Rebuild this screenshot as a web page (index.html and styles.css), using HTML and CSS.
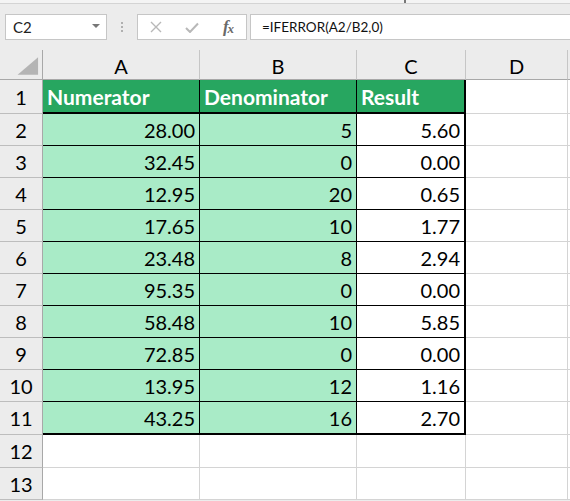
FILE: index.html
```html
<!DOCTYPE html>
<html>
<head>
<meta charset="utf-8">
<link rel="stylesheet" href="styles.css">
</head>
<body>
<div class="top"><span class="handle"></span></div>
<div class="toolbar">
  <div class="namebox"><span class="nb-text">C2</span><span class="arrow"></span></div>
  <div class="sep"><i></i><i></i><i></i></div>
  <div class="btns">
    <span class="btn"><svg width="12" height="12" viewBox="0 0 12 12"><path d="M1 1L11 11M11 1L1 11" stroke="#b8b8b8" stroke-width="1.4" fill="none"/></svg></span>
    <span class="btn"><svg width="14" height="11" viewBox="0 0 14 11"><path d="M1 6L5 10L13 1.5" stroke="#b8b8b8" stroke-width="2" fill="none"/></svg></span>
    <span class="btn"><span class="fx">f<span class="fxx">x</span></span></span>
  </div>
  <div class="formula">=IFERROR(A2/B2,0)</div>
</div>
<div class="grid">
  <div class="cell corner"><svg width="43" height="29" viewBox="0 0 43 29"><polygon points="18,25 39,25 39,7" fill="#b4b4b4"/></svg></div>
  <div class="cell ch">A</div><div class="cell ch">B</div><div class="cell ch">C</div><div class="cell ch">D</div><div class="cell ch edge"></div>

  <div class="cell rh">1</div><div class="cell hd">Numerator</div><div class="cell hd">Denominator</div><div class="cell hd c">Result</div><div class="cell"></div><div class="cell edge"></div>

  <div class="cell rh">2</div><div class="cell dt">28.00</div><div class="cell dt">5</div><div class="cell res">5.60</div><div class="cell"></div><div class="cell edge"></div>
  <div class="cell rh">3</div><div class="cell dt">32.45</div><div class="cell dt">0</div><div class="cell res">0.00</div><div class="cell"></div><div class="cell edge"></div>
  <div class="cell rh">4</div><div class="cell dt">12.95</div><div class="cell dt">20</div><div class="cell res">0.65</div><div class="cell"></div><div class="cell edge"></div>
  <div class="cell rh">5</div><div class="cell dt">17.65</div><div class="cell dt">10</div><div class="cell res">1.77</div><div class="cell"></div><div class="cell edge"></div>
  <div class="cell rh">6</div><div class="cell dt">23.48</div><div class="cell dt">8</div><div class="cell res">2.94</div><div class="cell"></div><div class="cell edge"></div>
  <div class="cell rh">7</div><div class="cell dt">95.35</div><div class="cell dt">0</div><div class="cell res">0.00</div><div class="cell"></div><div class="cell edge"></div>
  <div class="cell rh">8</div><div class="cell dt">58.48</div><div class="cell dt">10</div><div class="cell res">5.85</div><div class="cell"></div><div class="cell edge"></div>
  <div class="cell rh">9</div><div class="cell dt">72.85</div><div class="cell dt">0</div><div class="cell res">0.00</div><div class="cell"></div><div class="cell edge"></div>
  <div class="cell rh">10</div><div class="cell dt">13.95</div><div class="cell dt">12</div><div class="cell res">1.16</div><div class="cell"></div><div class="cell edge"></div>
  <div class="cell rh">11</div><div class="cell dt last">43.25</div><div class="cell dt last">16</div><div class="cell res last">2.70</div><div class="cell"></div><div class="cell edge"></div>

  <div class="cell rh">12</div><div class="cell"></div><div class="cell"></div><div class="cell"></div><div class="cell"></div><div class="cell edge"></div>
  <div class="cell rh">13</div><div class="cell"></div><div class="cell"></div><div class="cell"></div><div class="cell"></div><div class="cell edge"></div>
</div>
</body>
</html>
```
FILE: styles.css
```css
html, body {
  margin: 0;
  padding: 0;
  background: #ececec;
  width: 570px;
  height: 501px;
  overflow: hidden;
}
body {
  font-family: Lato, "Open Sans", sans-serif;
  color: #000;
}
.top {
  height: 3px;
  background: #f4f4f4;
  border-bottom: 1px solid #d4d4d4;
  display: flex;
}
.handle {
  width: 2px;
  height: 3px;
  background: #777;
  margin-left: 404px;
}
.toolbar {
  height: 46px;
  box-sizing: border-box;
  padding: 10px 0 0 5px;
  display: flex;
  align-items: flex-start;
}
.namebox, .btns, .formula {
  height: 26px;
  box-sizing: border-box;
  background: #fff;
  border: 1px solid #c6c6c6;
  display: flex;
  align-items: center;
}
.namebox {
  width: 102px;
  padding-left: 7px;
  justify-content: space-between;
  padding-right: 6px;
}
.nb-text {
  font-size: 15px;
  color: #222;
}
.arrow {
  width: 0;
  height: 0;
  border-left: 4px solid transparent;
  border-right: 4px solid transparent;
  border-top: 4px solid #777;
  margin-top: -3px;
}
.sep {
  width: 30px;
  height: 26px;
  display: flex;
  flex-direction: column;
  align-items: center;
  justify-content: center;
  gap: 2px;
}
.sep i {
  width: 2px;
  height: 2px;
  background: #b0b0b0;
}
.btns {
  width: 110px;
}
.btn {
  width: 36px;
  display: flex;
  justify-content: center;
  align-items: center;
  height: 24px;
}
.fx {
  font-family: "Liberation Serif", serif;
  font-style: italic;
  font-weight: bold;
  font-size: 17px;
  color: #6a6a6a;
  letter-spacing: -1px;
}
.fxx {
  font-size: 13px;
  position: relative;
  top: 1px;
}
.formula {
  margin-left: 3px;
  flex: 1;
  border-right: none;
  padding-left: 11px;
  font-size: 13.5px;
  color: #111;
}
.grid {
  display: grid;
  grid-template-columns: 43px 157px 157px 109px 102px 2px;
  grid-template-rows: 30px 34px repeat(9, 32px) 33px 33px 32px;
}
.cell {
  box-sizing: border-box;
  background: #fff;
  border-right: 1px solid #d4d4d4;
  border-bottom: 1px solid #d4d4d4;
  display: flex;
  align-items: center;
  font-size: 20px;
  overflow: hidden;
  white-space: nowrap;
}
.edge {
  border-right: none;
}
.corner {
  background: #ececec;
  border-right: 1px solid #a8a8a8;
  border-bottom: 1px solid #a8a8a8;
}
.ch {
  background: #ececec;
  justify-content: center;
  border-right-color: #c6c6c6;
  border-bottom-color: #a8a8a8;
  padding-top: 3px;
  font-size: 20px;
}
.ch.edge {
  border-right: none;
}
.rh {
  background: #ececec;
  justify-content: center;
  border-right-color: #a8a8a8;
  border-bottom-color: #bdbdbd;
  font-size: 20px;
}
.hd {
  background: #27a660;
  color: #fff;
  font-weight: bold;
  font-size: 21px;
  padding-left: 4px;
  border-right-color: #000;
  border-bottom: 2px solid #000;
}
.hd.c {
  border-right: 2px solid #000;
}
.dt {
  background: #a9ebc7;
  justify-content: flex-end;
  padding-right: 4px;
  border-right-color: #000;
  border-bottom-color: #000;
}
.res {
  justify-content: flex-end;
  padding-right: 4px;
  border-right: 2px solid #000;
  border-bottom-color: #000;
}
.last {
  border-bottom: 2px solid #000;
}
```
